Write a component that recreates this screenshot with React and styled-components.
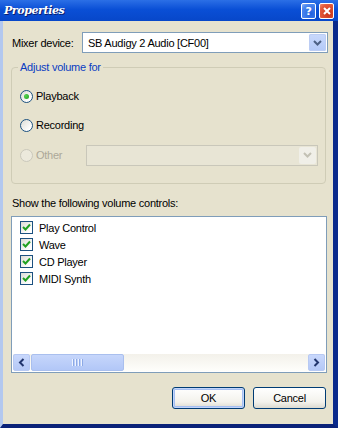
import React from 'react';
import styled, { createGlobalStyle, css } from 'styled-components';

const GlobalStyle = createGlobalStyle`
  body {
    margin: 0;
    font-family: 'Liberation Sans', Arial, sans-serif;
    font-size: 11px;
    letter-spacing: -0.25px;
    color: #000;
  }
`;

const Window = styled.div`
  width: 338px;
  height: 428px;
  display: flex;
  flex-direction: column;
  overflow: hidden;
`;

const TitleBar = styled.div`
  height: 21px;
  flex: none;
  display: flex;
  align-items: center;
  justify-content: space-between;
  padding: 0 4px 0 4px;
  background: linear-gradient(#2b6fe6, #0a4fd6 45%, #0747c9);
`;

const Title = styled.span`
  color: #fff;
  font-family: 'DejaVu Serif', 'Liberation Serif', serif;
  font-weight: bold;
  font-style: italic;
  font-size: 11px;
  letter-spacing: -0.4px;
  text-shadow: 1px 1px 0 #0a1f6e;
`;

const TitleButtons = styled.div`
  display: flex;
  gap: 3px;
  margin-top: 1px;
`;

const TitleButton = styled.div`
  width: 13px;
  height: 14px;
  border: 1px solid #fff;
  border-radius: 2px;
  display: flex;
  align-items: center;
  justify-content: center;
  color: #fff;
  font-weight: bold;
  font-size: 11px;
  font-family: 'DejaVu Sans', sans-serif;
  background: ${({ $close }) =>
    $close
      ? 'radial-gradient(circle at 70% 70%, #c8341a, #e35a3b 70%, #f08c70)'
      : 'radial-gradient(circle at 70% 70%, #2160df, #4b86ef 70%, #8db4f5)'};
`;

const Body = styled.div`
  flex: 1;
  display: flex;
  flex-direction: column;
  background: #e6e2ce;
  border-left: 3px solid #b3c8ef;
  border-right: 5px solid #0a2a8c;
  border-bottom: 4px solid #0a2278;
  padding: 11px 5px 0 8px;
`;

const Row = styled.div`
  display: flex;
  align-items: center;
`;

const Label = styled.span`
  width: 70px;
  padding-left: 1px;
`;

const Combo = styled.div`
  width: ${({ $width }) => $width}px;
  height: 21px;
  box-sizing: border-box;
  border: 1px solid ${({ $disabled }) => ($disabled ? '#c9c7ba' : '#7f9db9')};
  background: ${({ $disabled }) => ($disabled ? '#e8e5d5' : '#fff')};
  display: flex;
  align-items: center;
  padding: 1px;
`;

const ComboText = styled.span`
  flex: 1;
  padding-left: 4px;
`;

const DropButton = styled.div`
  width: 17px;
  height: 17px;
  border-radius: 2px;
  display: flex;
  align-items: center;
  justify-content: center;
  ${({ $disabled }) =>
    $disabled
      ? css`
          background: #f0efe8;
        `
      : css`
          background: linear-gradient(#c9d9fc, #b3c9f8);
          box-shadow: inset 0 0 0 1px #bccdf4;
        `}
`;

const Chevron = ({ color }) => (
  <svg width="9" height="6" viewBox="0 0 9 6">
    <path d="M1 1 L4.5 4.5 L8 1" stroke={color} strokeWidth="2" fill="none" />
  </svg>
);

const GroupBox = styled.div`
  position: relative;
  margin-top: 14px;
  width: 315px;
  height: 117px;
  box-sizing: border-box;
  border: 1px solid #cfccb6;
  border-radius: 4px;
  padding: 18px 0 0 8px;
  display: flex;
  flex-direction: column;
  gap: 9px;
`;

const Legend = styled.span`
  position: absolute;
  top: -7px;
  left: 6px;
  padding: 0 2px;
  background: #e6e2ce;
  color: #0a3cc2;
`;

const RadioRow = styled(Row)`
  height: ${({ $tall }) => ($tall ? 22 : 20)}px;
  gap: 3px;
  color: ${({ $disabled }) => ($disabled ? '#aca899' : '#000')};
`;

const RadioCircle = styled.div`
  width: 13px;
  height: 13px;
  box-sizing: border-box;
  border-radius: 50%;
  border: 1px solid ${({ $disabled }) => ($disabled ? '#cac8bb' : '#1c5180')};
  background: ${({ $disabled }) =>
    $disabled ? '#ece9dc' : 'linear-gradient(135deg, #dcdcd5, #ffffff 80%)'};
  display: flex;
  align-items: center;
  justify-content: center;

  &::after {
    content: '';
    display: ${({ $checked }) => ($checked ? 'block' : 'none')};
    width: 5px;
    height: 5px;
    border-radius: 50%;
    background: radial-gradient(circle at 35% 35%, #55d34f, #21a121);
  }
`;

const RadioLabel = styled.span`
  width: ${({ $width }) => $width || 'auto'};
`;

const SectionLabel = styled.div`
  margin-top: 13px;
  padding-left: 1px;
`;

const ListBox = styled.div`
  margin-top: 7px;
  width: 316px;
  height: 157px;
  box-sizing: border-box;
  border: 1px solid #7f9db9;
  background: #fff;
  display: flex;
  flex-direction: column;
  padding: 0 1px 1px 1px;
`;

const Items = styled.div`
  flex: 1;
  padding: 2px 0 0 7px;
`;

const Item = styled(Row)`
  height: 17px;
  gap: 6px;
`;

const CheckBox = styled.div`
  width: 13px;
  height: 13px;
  box-sizing: border-box;
  border: 1px solid #1c5180;
  background: linear-gradient(135deg, #dcdcd5, #ffffff 80%);
  display: flex;
  align-items: center;
  justify-content: center;
`;

const ScrollBar = styled.div`
  height: 17px;
  display: flex;
  background: linear-gradient(#f3f1ea, #fefefb);
`;

const ScrollArrow = styled.div`
  width: 17px;
  height: 17px;
  box-sizing: border-box;
  border-radius: 2px;
  border: 1px solid #b7c9f3;
  background: linear-gradient(#c9d8fc, #b4c8f6);
  display: flex;
  align-items: center;
  justify-content: center;
`;

const Thumb = styled.div`
  width: 93px;
  height: 17px;
  box-sizing: border-box;
  margin-left: 1px;
  border-radius: 2px;
  border: 1px solid #a9bfee;
  background: linear-gradient(#c6d6fb, #b2c7f7);
  display: flex;
  align-items: center;
  justify-content: center;
  gap: 1px;
`;

const Grip = styled.span`
  width: 1px;
  height: 7px;
  background: #eef3fe;
  box-shadow: 1px 0 0 #8ca9e6;
  margin-right: 1px;
`;

const Track = styled.div`
  flex: 1;
`;

const ButtonRow = styled(Row)`
  justify-content: flex-end;
  gap: 8px;
  margin-top: 14px;
  padding-right: 2px;
`;

const Button = styled.div`
  width: 73px;
  height: 22px;
  box-sizing: border-box;
  border: 1px solid #003c74;
  border-radius: 3px;
  background: linear-gradient(#ffffff, #f3f2ec 70%, #dcdad0);
  display: flex;
  align-items: center;
  justify-content: center;
  ${({ $default }) =>
    $default &&
    css`
      box-shadow: inset 0 0 0 1px #c2d5fb, inset 0 0 0 2px #a5bff2;
    `}
`;

const Arrow = ({ dir }) => (
  <svg width="7" height="9" viewBox="0 0 7 9">
    <path
      d={dir === 'left' ? 'M5.5 1 L2 4.5 L5.5 8' : 'M1.5 1 L5 4.5 L1.5 8'}
      stroke="#22366d"
      strokeWidth="2"
      fill="none"
    />
  </svg>
);

const Check = () => (
  <svg width="9" height="9" viewBox="0 0 9 9">
    <path d="M1 4 L3.5 6.5 L8 1.5" stroke="#21a121" strokeWidth="2" fill="none" />
  </svg>
);

const controls = ['Play Control', 'Wave', 'CD Player', 'MIDI Synth'];

const App = () => (
  <>
    <GlobalStyle />
    <Window>
      <TitleBar>
        <Title>Properties</Title>
        <TitleButtons>
          <TitleButton>?</TitleButton>
          <TitleButton $close>
            <svg width="8" height="8" viewBox="0 0 8 8">
              <path d="M1 1 L7 7 M7 1 L1 7" stroke="#fff" strokeWidth="2" />
            </svg>
          </TitleButton>
        </TitleButtons>
      </TitleBar>

      <Body>
        <Row>
          <Label>Mixer device:</Label>
          <Combo $width={246}>
            <ComboText>SB Audigy 2 Audio [CF00]</ComboText>
            <DropButton>
              <Chevron color="#4d6185" />
            </DropButton>
          </Combo>
        </Row>

        <GroupBox>
          <Legend>Adjust volume for</Legend>
          <RadioRow>
            <RadioCircle $checked />
            <RadioLabel>Playback</RadioLabel>
          </RadioRow>
          <RadioRow>
            <RadioCircle />
            <RadioLabel>Recording</RadioLabel>
          </RadioRow>
          <RadioRow $tall $disabled>
            <RadioCircle $disabled />
            <RadioLabel $width="47px">Other</RadioLabel>
            <Combo $width={232} $disabled>
              <ComboText />
              <DropButton $disabled>
                <Chevron color="#c3c1b4" />
              </DropButton>
            </Combo>
          </RadioRow>
        </GroupBox>

        <SectionLabel>Show the following volume controls:</SectionLabel>

        <ListBox>
          <Items>
            {controls.map(name => (
              <Item key={name}>
                <CheckBox>
                  <Check />
                </CheckBox>
                {name}
              </Item>
            ))}
          </Items>
          <ScrollBar>
            <ScrollArrow>
              <Arrow dir="left" />
            </ScrollArrow>
            <Thumb>
              <Grip />
              <Grip />
              <Grip />
              <Grip />
            </Thumb>
            <Track />
            <ScrollArrow>
              <Arrow dir="right" />
            </ScrollArrow>
          </ScrollBar>
        </ListBox>

        <ButtonRow>
          <Button $default>OK</Button>
          <Button>Cancel</Button>
        </ButtonRow>
      </Body>
    </Window>
  </>
);

export default App;
